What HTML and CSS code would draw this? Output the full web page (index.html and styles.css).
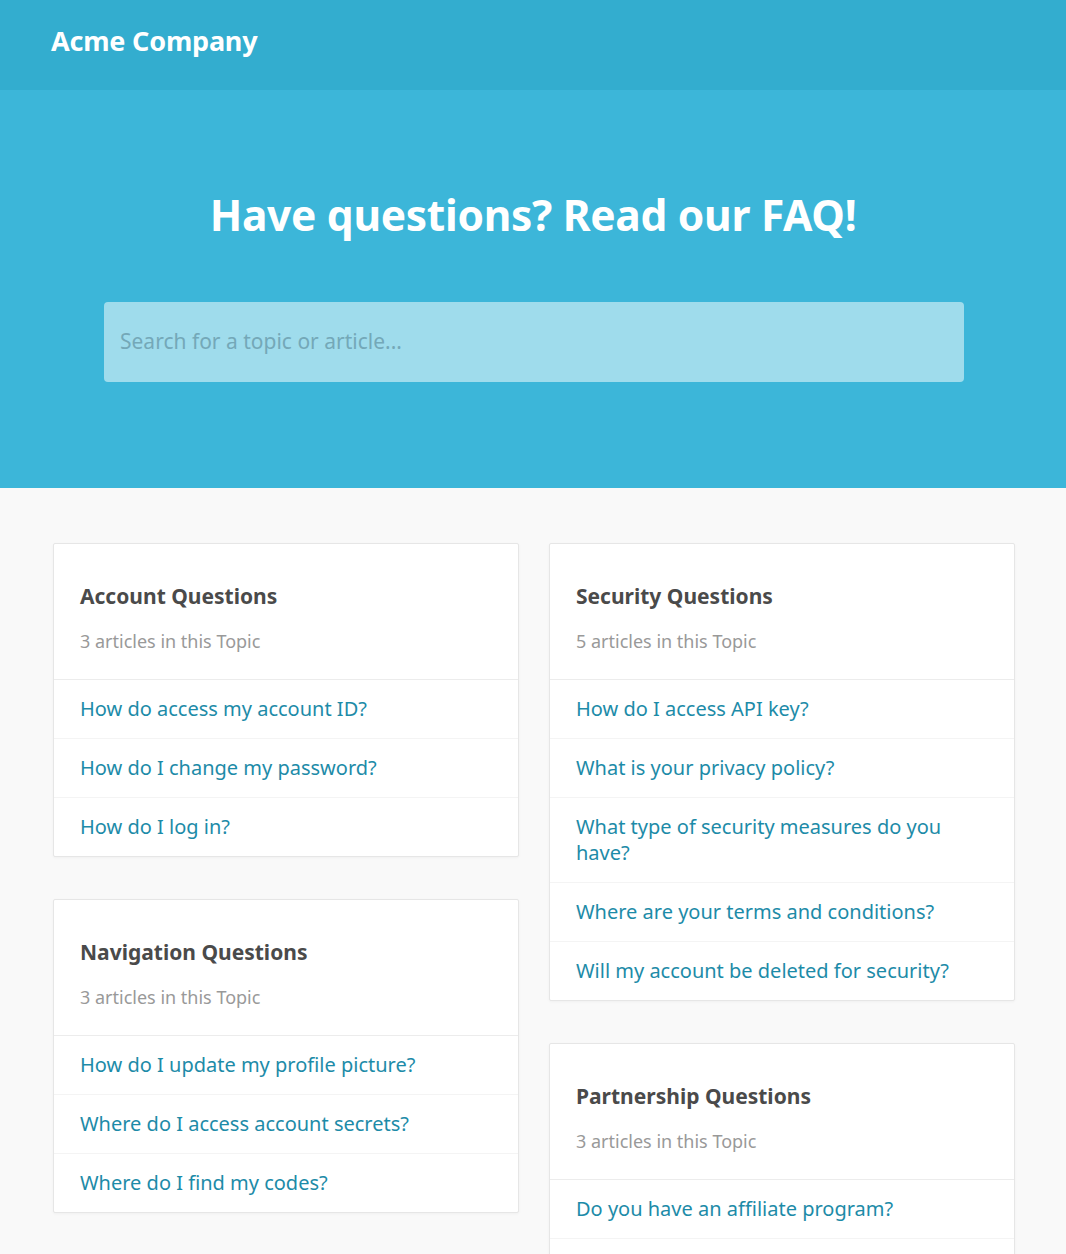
FILE: index.html
```html
<!DOCTYPE html>
<html>
<head>
<meta charset="utf-8">
<link rel="stylesheet" href="styles.css">
</head>
<body>
<header class="topbar">
  <div class="brand">Acme Company</div>
</header>
<section class="hero">
  <h1 class="hero-title">Have questions? Read our FAQ!</h1>
  <div class="search">
    <input class="search-input" type="text" placeholder="Search for a topic or article...">
  </div>
</section>
<main class="content">
  <div class="column">
    <div class="card">
      <div class="card-head">
        <h2 class="card-title">Account Questions</h2>
        <p class="card-sub">3 articles in this Topic</p>
      </div>
      <ul class="card-list">
        <li><a href="#">How do access my account ID?</a></li>
        <li><a href="#">How do I change my password?</a></li>
        <li><a href="#">How do I log in?</a></li>
      </ul>
    </div>
    <div class="card">
      <div class="card-head">
        <h2 class="card-title">Navigation Questions</h2>
        <p class="card-sub">3 articles in this Topic</p>
      </div>
      <ul class="card-list">
        <li><a href="#">How do I update my profile picture?</a></li>
        <li><a href="#">Where do I access account secrets?</a></li>
        <li><a href="#">Where do I find my codes?</a></li>
      </ul>
    </div>
  </div>
  <div class="column">
    <div class="card">
      <div class="card-head">
        <h2 class="card-title">Security Questions</h2>
        <p class="card-sub">5 articles in this Topic</p>
      </div>
      <ul class="card-list">
        <li><a href="#">How do I access API key?</a></li>
        <li><a href="#">What is your privacy policy?</a></li>
        <li><a href="#">What type of security measures do you have?</a></li>
        <li><a href="#">Where are your terms and conditions?</a></li>
        <li><a href="#">Will my account be deleted for security?</a></li>
      </ul>
    </div>
    <div class="card">
      <div class="card-head">
        <h2 class="card-title">Partnership Questions</h2>
        <p class="card-sub">3 articles in this Topic</p>
      </div>
      <ul class="card-list">
        <li><a href="#">Do you have an affiliate program?</a></li>
        <li><a href="#">How do I become a partner?</a></li>
        <li><a href="#">What are the partner benefits?</a></li>
      </ul>
    </div>
  </div>
</main>
</body>
</html>
```
FILE: styles.css
```css
* { box-sizing: border-box; }
html, body { margin: 0; padding: 0; }
body {
  font-family: "Noto Sans", "Open Sans", "Liberation Sans", sans-serif;
  background: #f9f9f9;
  color: #4a4a4a;
}
.topbar {
  height: 90px;
  background: #33adcf;
  display: flex;
  align-items: center;
  padding: 0 51px;
}
.brand {
  color: #fff;
  font-weight: 700;
  font-size: 27px;
  letter-spacing: -0.2px;
  margin-top: -9px;
}
.hero {
  background: #3cb6d9;
  height: 398px;
  display: flex;
  flex-direction: column;
  align-items: center;
}
.hero-title {
  margin: 100px 0 0;
  color: #fff;
  font-weight: 700;
  font-size: 42.5px;
  line-height: 50px;
  letter-spacing: -0.3px;
}
.search {
  margin-top: 62px;
  width: 860px;
  margin-left: 2px;
}
.search-input {
  width: 100%;
  height: 80px;
  border: none;
  border-radius: 4px;
  background: #9fdcec;
  padding: 0 16px 3px;
  font-family: inherit;
  font-size: 21px;
  color: #4a4a4a;
  outline: none;
}
.search-input::placeholder { color: #74a8b8; }
.content {
  display: flex;
  gap: 30px;
  padding: 55px 51px 0 53px;
  align-items: flex-start;
}
.column {
  flex: 1;
  display: flex;
  flex-direction: column;
  gap: 42px;
}
.card {
  background: #fff;
  border: 1px solid #e6e6e6;
  border-radius: 2px;
  box-shadow: 0 1px 3px rgba(0,0,0,0.04);
}
.card-head {
  padding: 39px 26px 26px;
  border-bottom: 1px solid #ececec;
}
.card-title {
  margin: 0;
  font-size: 21px;
  line-height: 26px;
  font-weight: 700;
  color: #4a4a4a;
}
.card-sub {
  margin: 20px 0 0;
  font-size: 18px;
  line-height: 24px;
  color: #999;
}
.card-list {
  list-style: none;
  margin: 0;
  padding: 0;
}
.card-list li {
  padding: 16px 26px;
  border-top: 1px solid #f4f4f4;
}
.card-list li:first-child { border-top: none; }
.card-list a {
  color: #1d8ba8;
  text-decoration: none;
  font-size: 20px;
  line-height: 26px;
  display: block;
}
```
